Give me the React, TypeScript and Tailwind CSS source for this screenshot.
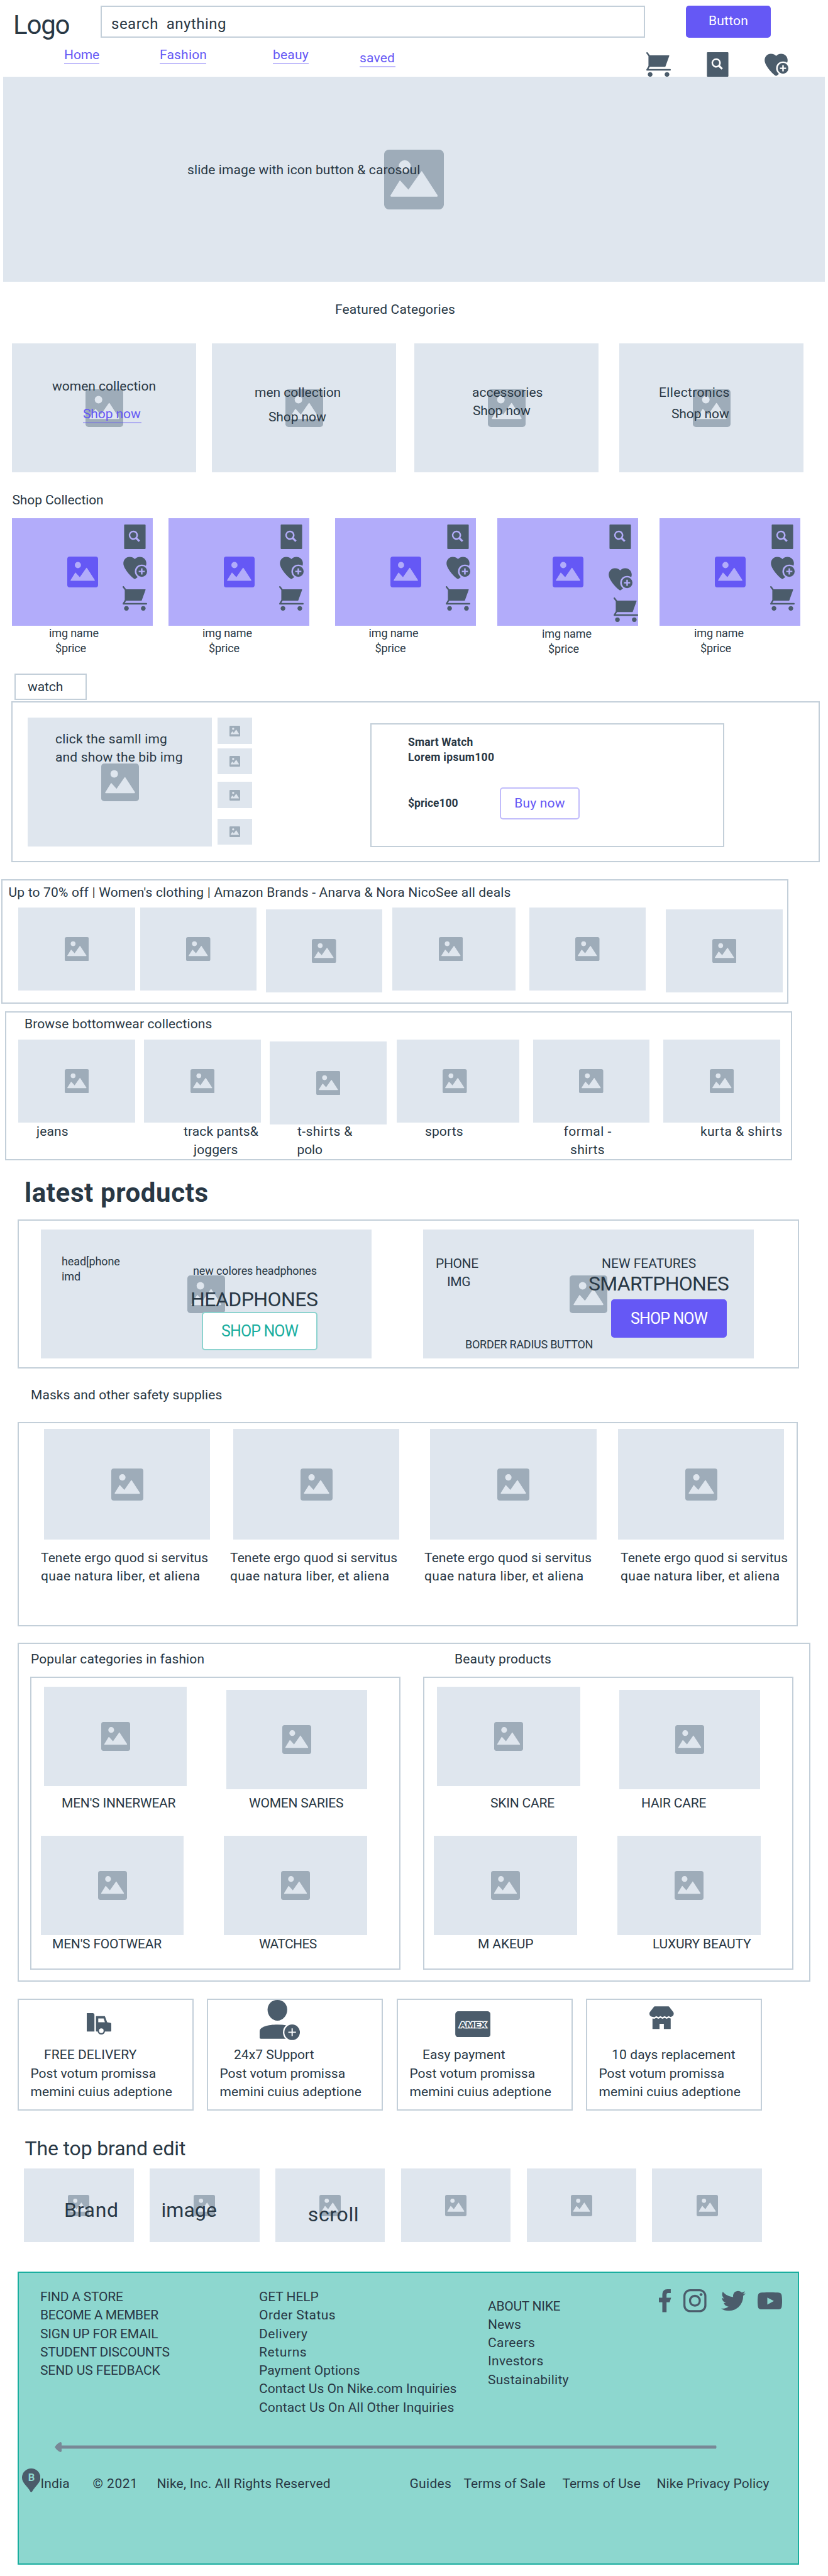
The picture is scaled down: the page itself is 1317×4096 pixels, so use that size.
import React from "react";
import { FaTwitter } from "react-icons/fa";
import { twMerge } from "tailwind-merge";

type Kids = { className?: string; children?: React.ReactNode };

/* Body-size line of text */
function T({ className = "", children }: Kids) {
  return <div className={twMerge("whitespace-pre text-[21px] leading-[29px] tracking-[0.12px]", className)}>{children}</div>;
}
/* All-caps body line, set slightly tighter */
function Caps({ className = "", children }: Kids) {
  return <div className={twMerge("whitespace-pre text-[21px] leading-[29px] tracking-[-0.2px]", className)}>{children}</div>;
}
function Small({ className = "", children }: Kids) {
  return <div className={twMerge("whitespace-pre text-[18px] leading-[24.4px] tracking-[-0.12px]", className)}>{children}</div>;
}
function Big({ className = "", children }: Kids) {
  return <div className={twMerge("whitespace-pre text-[32px] leading-[40px]", className)}>{children}</div>;
}
function Frame({ className = "", children }: Kids) {
  return <div className={"shrink-0 border-2 border-[#c3cfd9] " + className}>{children}</div>;
}

function PictureIcon({ className = "" }: { className?: string }) {
  return (
    <svg viewBox="0 0 100 100" className={"shrink-0 " + className}>
      <rect width="100" height="100" rx="8" className="fill-current" />
      <circle cx="34.5" cy="27.5" r="10" fill="var(--hole)" />
      <path
        d="M12 78.7 Q10 78.7 10.6 76.6 L25.6 52.4 Q26.5 51 27.5 52.3 L40.7 66.9 L61.8 36.8 Q62.8 35.4 63.8 36.8 L89.3 76 Q90 78.7 88 78.7 Z"
        fill="var(--hole)"
      />
    </svg>
  );
}

function Pic({ className = "", icon = "size-[38.5px]", children }: Kids & { icon?: string }) {
  return (
    <div className={"relative flex shrink-0 items-center justify-center bg-[#dfe6ee] text-[#9eacb9] [--hole:#dfe6ee] " + className}>
      <PictureIcon className={icon} />
      {children && <div className="absolute inset-0 text-[#293845]">{children}</div>}
    </div>
  );
}

function CartIcon({ className = "" }: { className?: string }) {
  return (
    <svg viewBox="0 0 32 32" className={"size-[39px] shrink-0 text-[#4b5c6b] " + className}>
      <path d="M3 4H29.5Q30.1 4 30 4.7L25.2 18Q25 19 24.3 19H3Z" className="fill-current" />
      <path d="M1 1L4 5V18L1 23H31" fill="none" className="stroke-current" strokeWidth="2" strokeLinecap="round" strokeLinejoin="round" />
      <circle cx="5" cy="29" r="3" className="fill-current" />
      <circle cx="27" cy="29" r="3" className="fill-current" />
    </svg>
  );
}
function SearchDocIcon({ className = "" }: { className?: string }) {
  return (
    <svg viewBox="0 0 32 32" className={"size-[39px] shrink-0 text-[#4b5c6b] " + className}>
      <path
        fillRule="evenodd"
        className="fill-current"
        d="M3 0H29Q30 0 30 1V31Q30 32 29 32H3Q2 32 2 31V1Q2 0 3 0ZM14 8A6 6 0 1 0 17.2 19.1L21 22.8L22.8 21L19.1 17.2A6 6 0 0 0 14 8ZM14 10A4 4 0 1 1 14 18A4 4 0 0 1 14 10Z"
      />
    </svg>
  );
}
function HeartPlusIcon({ className = "" }: { className?: string }) {
  const id = React.useId();
  return (
    <svg viewBox="0 0 32 32" className={"size-[39px] shrink-0 text-[#4b5c6b] " + className}>
      <mask id={id}>
        <rect width="32" height="32" fill="#fff" />
        <circle cx="25" cy="21" r="9" fill="#000" />
      </mask>
      <path
        mask={`url(#${id})`}
        className="fill-current"
        d="M16 31C14.2 31 1 18.5 1 10.5C1 5.6 4.6 2 9 2C12.2 2 14.8 3.3 16 5C17.2 3.3 19.8 2 22.5 2C27.4 2 31 5.6 31 10.5C31 18.5 17.8 31 16 31Z"
      />
      <path fillRule="evenodd" className="fill-current" d="M25 14A7 7 0 1 1 25 28A7 7 0 0 1 25 14ZM24 17V20H21V22H24V25H26V22H29V20H26V17Z" />
    </svg>
  );
}
function TruckIcon({ className = "" }: { className?: string }) {
  return (
    <svg viewBox="0 0 32 28" className={"h-[34.1px] w-[39px] shrink-0 text-[#4b5c6b] " + className}>
      <path
        fillRule="evenodd"
        className="fill-current"
        d="M0 0H8Q10 .2 10 2V24H0ZM12.6 4H23.4Q23.7 4 23.8 4.4L26.6 12L31 12.8Q32 13 32 14V23Q32 24 31 24H23.8A4.9 4.9 0 0 1 14.2 24H13Q12 24 12 23V4.6Q12 4 12.6 4ZM15 7V12H23.7L22 7ZM19 20A3 3 0 1 0 19 26A3 3 0 0 0 19 20Z"
      />
    </svg>
  );
}
function PersonPlusIcon({ className = "" }: { className?: string }) {
  const id = React.useId();
  return (
    <svg viewBox="0 0 105 105" className={"size-[64px] shrink-0 text-[#4b5c6b] " + className}>
      <mask id={id}>
        <rect width="105" height="105" fill="#fff" />
        <circle cx="84.8" cy="84.3" r="24" fill="#000" />
      </mask>
      <path className="fill-current" d="M46.3 0C61 0 72 11 72 25.5C72 41 60 54.2 46.3 54.2C32.6 54.2 20.6 41 20.6 25.5C20.6 11 31.6 0 46.3 0Z" />
      <path mask={`url(#${id})`} className="fill-current" d="M0 99V82C0 70 22 64.3 46.3 64.3Q60 64.3 70 66.5V101.4H3Q.4 101.4 0 99Z" />
      <path
        fillRule="evenodd"
        className="fill-current"
        d="M84.8 64A20.3 20.3 0 1 1 84.8 104.6A20.3 20.3 0 0 1 84.8 64ZM83.2 74.3V82.9H74.8V85.7H83.2V94.3H86.4V85.7H94.8V82.9H86.4V74.3Z"
      />
    </svg>
  );
}
function AmexIcon({ className = "" }: { className?: string }) {
  return (
    <svg viewBox="0 0 92 68" className={"h-[41.4px] w-[56.3px] shrink-0 " + className}>
      <rect width="92" height="68" rx="8" fill="#4b5c6b" />
      <text
        x="46" y="42" textAnchor="middle" textLength="70" lengthAdjust="spacingAndGlyphs"
        fontFamily="Roboto, sans-serif" fontWeight="900" fontSize="22"
        fill="#4b5c6b" stroke="#fff" strokeWidth="4.5" strokeLinejoin="miter" paintOrder="stroke"
      >
        AMEX
      </text>
    </svg>
  );
}
function StoreIcon({ className = "" }: { className?: string }) {
  return (
    <svg viewBox="0 0 32 30" className={"h-[36.5px] w-[38.6px] shrink-0 text-[#4b5c6b] " + className}>
      <path className="fill-current" d="M7 0H25Q25.8 0 26.1 .7L31.4 7.6Q32 8.5 32 9.5A4.2 4.2 0 0 1 27.5 14L25.3 12.9L22.7 14.4L20 12.9L17.2 14.4L14.5 12.9L11.8 14.4L9 12.9L6.4 14.4L4.5 14A4.2 4.2 0 0 1 0 9.5Q0 8.5 .6 7.6L5.9 .7Q6.2 0 7 0Z" />
      <path className="fill-current" d="M4 16L6.4 16.4L9 15.2L11.8 16.4L14.5 15.2L17.2 16.4L20 15.2L22.7 16.4L25.3 15.2L28 16V30H19V23H13.3V30H4Z" />
    </svg>
  );
}

function NavLink({ className = "", children }: Kids) {
  return (
    <a className={"shrink-0 whitespace-pre border-b-2 border-[#c1bcfb] text-[21px] leading-[25px] text-[#6558f5] " + className}>
      {children}
    </a>
  );
}

function Header() {
  return (
    <header className="flex h-[122px] flex-col">
      <div className="flex h-[60px] items-start">
        <div className="ml-[21px] mt-[14.5px] w-[100px] text-[42px] leading-[50px] tracking-[-1.2px]">Logo</div>
        <Frame className="ml-[39px] mt-[9px] h-[51px] w-[866px] pl-[15px] pt-[11px]">
          <div className="whitespace-pre text-[24px] leading-[33px] tracking-[0.5px]">search  anything</div>
        </Frame>
        <button className="ml-[65px] mt-[9px] h-[51px] w-[135px] rounded-[5px] bg-[#6558f5] pb-px text-[21px] tracking-[0.2px] text-white">
          Button
        </button>
      </div>
      <nav className="flex items-start">
        <NavLink className="ml-[102px] mt-[15px] w-[56px] tracking-[-0.1px]">Home</NavLink>
        <NavLink className="ml-[96px] mt-[15px] w-[74px] tracking-[0.2px]">Fashion</NavLink>
        <NavLink className="ml-[106px] mt-[15px] w-[57px] tracking-[0.2px]">beauy</NavLink>
        <NavLink className="ml-[81px] mt-[20px] w-[57px] tracking-[0.2px]">saved</NavLink>
        <CartIcon className="ml-[399px] mt-[23px]" />
        <SearchDocIcon className="ml-[55px] mt-[23px]" />
        <HeartPlusIcon className="ml-[54px] mt-[23px]" />
      </nav>
    </header>
  );
}

function Featured() {
  return (
    <section className="flex h-[303px] flex-col">
      <T className="ml-[533px] mt-[30px]">Featured Categories</T>
      <div className="mt-[39px] flex">
        <Pic className="ml-[19px] h-[205px] w-[293px]" icon="size-[60px]">
          <T className="ml-[64px] mt-[54px] tracking-[0px]">women collection</T>
          <div className="ml-[113px] mt-[17px] flex">
            <a className="w-[93px] whitespace-pre border-b-2 border-[#6558f5]/40 text-[21px] leading-[25px] tracking-[-0.1px] text-[#6558f5]">Shop now</a>
          </div>
        </Pic>
        <Pic className="ml-[25px] h-[205px] w-[293px]" icon="size-[60px]">
          <T className="ml-[68px] mt-[64px] tracking-[0px]">men collection</T>
          <T className="ml-[90px] mt-[10px] tracking-[-0.1px]">Shop now</T>
        </Pic>
        <Pic className="ml-[29px] h-[205px] w-[293px]" icon="size-[60px]">
          <T className="ml-[92px] mt-[64px] tracking-[0px]">accessories</T>
          <T className="ml-[93px] tracking-[-0.1px]">Shop now</T>
        </Pic>
        <Pic className="ml-[33px] h-[205px] w-[293px]" icon="size-[60px]">
          <T className="ml-[63px] mt-[64px] tracking-[0.35px]">Ellectronics</T>
          <T className="ml-[83px] mt-[5px] tracking-[-0.1px]">Shop now</T>
        </Pic>
      </div>
    </section>
  );
}

const products = [
  { card: "ml-[19px]", name: "ml-[59px]", heart: "", cart: "" },
  { card: "ml-[25px]", name: "ml-[54px]", heart: "", cart: "" },
  { card: "ml-[41px]", name: "ml-[53.5px]", heart: "", cart: "" },
  { card: "ml-[34px]", name: "ml-[71px] pt-[1px]", heart: "mt-[18px]", cart: "ml-[9px]" },
  { card: "ml-[34px]", name: "ml-[55px]", heart: "", cart: "" },
];

function ShopCollection() {
  return (
    <section className="flex h-[320px] flex-col">
      <T className="ml-[19.5px] mt-[29.5px] tracking-[-0.1px]">Shop Collection</T>
      <div className="mt-[14.5px] flex">
        {products.map((p, i) => (
          <article key={i} className={"w-[224px] shrink-0 " + p.card}>
            <div className="relative flex h-[171px] items-center justify-center bg-[#b2acfa] text-[#6558f5] [--hole:#b2acfa]">
              <PictureIcon className="size-[49px]" />
              <div className="absolute left-[176px] top-[10px] flex flex-col gap-[9.8px]">
                <SearchDocIcon />
                <HeartPlusIcon className={p.heart} />
                <CartIcon className={p.cart} />
              </div>
            </div>
            <div className={p.name}>
              <Small>img name</Small>
              <Small className="ml-[10px]">$price</Small>
            </div>
          </article>
        ))}
      </div>
    </section>
  );
}

function Watch() {
  return (
    <section className="flex flex-col">
      <Frame className="ml-[23px] h-[42px] w-[115px] pl-[19px] pt-[5px]">
        <T className="tracking-[-0.1px]">watch</T>
      </Frame>
      <Frame className="ml-[18px] mt-[2px] flex h-[256px] w-[1286px]">
        <Pic className="ml-[24px] mt-[24px] h-[205px] w-[293px]" icon="size-[60px]">
          <T className="ml-[44px] mt-[20px] tracking-[0.2px]">click the samll img</T>
          <T className="ml-[44px] tracking-[0.16px]">and show the bib img</T>
        </Pic>
        <div className="ml-[9px] mt-[24px] flex flex-col">
          <Pic className="h-[42px] w-[55px]" icon="size-[17px]" />
          <Pic className="mt-[7px] h-[41px] w-[55px]" icon="size-[17px]" />
          <Pic className="mt-[12px] h-[42px] w-[55px]" icon="size-[17px]" />
          <Pic className="mt-[17px] h-[41px] w-[55px]" icon="size-[17px]" />
        </div>
        <Frame className="ml-[188px] mt-[33px] h-[197px] w-[563px] pl-[58px] pt-[16px] text-[17.5px] font-bold leading-[24.4px]">
          <div className="tracking-[0.16px]">Smart Watch</div>
          <div className="tracking-[0.3px]">Lorem ipsum100</div>
          <div className="mt-[35px] flex items-center">
            <div className="w-[146px]">$price100</div>
            <button className="h-[51px] w-[127px] rounded-[5px] border-2 border-[#c1bcfb] text-[21px] font-normal tracking-[0.2px] text-[#6558f5]">
              Buy now
            </button>
          </div>
        </Frame>
      </Frame>
    </section>
  );
}

function Deals() {
  return (
    <Frame className="ml-[2px] mt-[27px] h-[198px] w-[1252px]">
      <T className="ml-[9.5px] mt-[5px] tracking-[0.18px]">Up to 70% off | Women's clothing | Amazon Brands - Anarva &amp; Nora NicoSee all deals</T>
      <div className="mt-[9px] flex items-start">
        <Pic className="ml-[25px] h-[132px] w-[186px]" />
        <Pic className="ml-[8px] h-[132px] w-[185px]" />
        <Pic className="ml-[15px] mt-[3px] h-[132px] w-[185px]" />
        <Pic className="ml-[16px] h-[132px] w-[196px]" icon="size-[38.5px] mr-[10px]" />
        <Pic className="ml-[22px] h-[132px] w-[185px]" />
        <Pic className="ml-[32px] mt-[3px] h-[132px] w-[186px]" />
      </div>
    </Frame>
  );
}

function Bottomwear() {
  return (
    <Frame className="ml-[8px] mt-[12px] h-[237px] w-[1252px]">
      <T className="ml-[29px] mt-[4px]">Browse bottomwear collections</T>
      <div className="mt-[10px] flex items-start">
        <div className="ml-[19px] w-[186px] shrink-0">
          <Pic className="h-[132px]" />
          <T className="ml-[29px]">jeans</T>
        </div>
        <div className="ml-[14px] w-[186px] shrink-0">
          <Pic className="h-[132px]" />
          <T className="ml-[63px]">track pants&amp;</T>
          <T className="ml-[79px]">joggers</T>
        </div>
        <div className="ml-[14px] mt-[3px] w-[186px] shrink-0">
          <Pic className="h-[132px]" />
          <T className="-mt-[3px] ml-[44px] tracking-[0.4px]">t-shirts &amp;</T>
          <T className="ml-[43.5px] tracking-[-0.1px]">polo</T>
        </div>
        <div className="ml-[16px] w-[195px] shrink-0">
          <Pic className="h-[132px]" icon="size-[38.5px] mr-[10px]" />
          <T className="ml-[45px]">sports</T>
        </div>
        <div className="ml-[22px] w-[185px] shrink-0">
          <Pic className="h-[132px]" />
          <T className="ml-[48.5px] tracking-[0.5px]">formal -</T>
          <T className="ml-[59px] tracking-[0.36px]">shirts</T>
        </div>
        <div className="ml-[22px] w-[186px] shrink-0">
          <Pic className="h-[132px]" />
          <T className="ml-[59px] tracking-[0.45px]">kurta &amp; shirts</T>
        </div>
      </div>
    </Frame>
  );
}

function Latest() {
  return (
    <section className="flex flex-col">
      <h1 className="ml-[39px] mt-[26.5px] h-[50px] text-[42px] font-bold leading-[50px] tracking-[0.6px]">latest products</h1>
      <Frame className="ml-[28px] mt-[17.5px] flex h-[237px] w-[1243px]">
        <Pic className="ml-[35px] mt-[14px] h-[205px] w-[526px]" icon="size-[60px]">
          <Small className="absolute left-[33px] top-[39px]">{"head[phone\nimd"}</Small>
          <Small className="absolute left-[242px] top-[54px]">new colores headphones</Small>
          <Big className="absolute left-[238px] top-[91px] tracking-[-0.55px]">HEADPHONES</Big>
          <button className="absolute left-[256px] top-[131px] h-[61px] w-[184px] rounded-[5px] border-2 border-[#8dd3cf] bg-white text-[25px] tracking-[-0.9px] text-[#1aae9f]">
            SHOP NOW
          </button>
        </Pic>
        <Pic className="ml-[82px] mt-[14px] h-[205px] w-[526px]" icon="size-[60px]">
          <Caps className="absolute left-[20px] top-[40px] tracking-[-0.36px]">PHONE</Caps>
          <Caps className="absolute left-[38px] top-[69px] tracking-[-0.42px]">IMG</Caps>
          <Caps className="absolute left-[284px] top-[40px] tracking-[0px]">NEW FEATURES</Caps>
          <Big className="absolute left-[263px] top-[66px] tracking-[-0.7px]">SMARTPHONES</Big>
          <button className="absolute left-[299px] top-[111px] h-[61px] w-[184px] rounded-[5px] bg-[#6558f5] text-[25px] tracking-[-0.9px] text-white">
            SHOP NOW
          </button>
          <Small className="absolute left-[67px] top-[171px] tracking-[-0.25px]">BORDER RADIUS BUTTON</Small>
        </Pic>
      </Frame>
    </section>
  );
}

const masks = [
  { box: "ml-[40px] w-[264px]", text: "-ml-[5px]" },
  { box: "ml-[37px] w-[264px]", text: "-ml-[5px]" },
  { box: "ml-[49px] w-[265px]", text: "-ml-[9px]" },
  { box: "ml-[34px] w-[264px]", text: "ml-[4px]" },
];

function Masks() {
  return (
    <section className="flex flex-col">
      <T className="ml-[49px] mt-[28px] tracking-[0.08px]">Masks and other safety supplies</T>
      <Frame className="ml-[28px] mt-[28px] flex h-[325px] w-[1241px]">
        {masks.map((m, i) => (
          <div key={i} className={"mt-[9px] shrink-0 " + m.box}>
            <Pic className="h-[176px]" icon="size-[51px]" />
            <div className={"mt-[15px] " + m.text}>
              <T className="tracking-[0.11px]">Tenete ergo quod si servitus</T>
              <T className="tracking-[0.36px]">quae natura liber, et aliena</T>
            </div>
          </div>
        ))}
      </Frame>
    </section>
  );
}

type Cell = { box: string; pic: string; label: string; text: string };
function CategoryPanel({ className, rows }: { className: string; rows: Cell[][] }) {
  return (
    <Frame className={className}>
      {rows.map((row, r) => (
        <div key={r} className="flex h-[236.5px] items-start">
          {row.map((c) => (
            <div key={c.text} className={"shrink-0 " + c.box}>
              <Pic className={c.pic} icon="size-[46px]" />
              <Caps className={c.label}>{c.text}</Caps>
            </div>
          ))}
        </div>
      ))}
    </Frame>
  );
}

const fashion: Cell[][] = [
  [
    { box: "ml-[20px] w-[227px]", pic: "h-[158px]", label: "ml-[28px] mt-[13px]", text: "MEN'S INNERWEAR" },
    { box: "ml-[63px] mt-[5px] w-[224px]", pic: "h-[158px]", label: "ml-[36px] mt-[8px]", text: "WOMEN SARIES" },
  ],
  [
    { box: "ml-[15px] w-[227px]", pic: "h-[158px]", label: "ml-[18px] mt-[0.5px]", text: "MEN'S FOOTWEAR" },
    { box: "ml-[64px] w-[228px]", pic: "h-[158px]", label: "ml-[56px] mt-[0.5px] tracking-[-0.6px]", text: "WATCHES" },
  ],
];
const beauty: Cell[][] = [
  [
    { box: "ml-[20px] w-[228px]", pic: "h-[158px]", label: "ml-[85px] mt-[13px]", text: "SKIN CARE" },
    { box: "ml-[62px] mt-[5px] w-[224px]", pic: "h-[158px]", label: "ml-[35px] mt-[8px]", text: "HAIR CARE" },
  ],
  [
    { box: "ml-[15px] w-[228px]", pic: "h-[158px]", label: "ml-[70px] mt-[0.5px] tracking-[-0.1px]", text: "M AKEUP" },
    { box: "ml-[64px] w-[228px]", pic: "h-[158px]", label: "ml-[56px] mt-[0.5px]", text: "LUXURY BEAUTY" },
  ],
];

function Popular() {
  return (
    <Frame className="ml-[28px] mt-[26px] h-[539px] w-[1261px]">
      <div className="mt-[10px] flex">
        <T className="ml-[19px] w-[674px]">Popular categories in fashion</T>
        <T>Beauty products</T>
      </div>
      <div className="mt-[13px] flex">
        <CategoryPanel className="ml-[18px] h-[466px] w-[589px] pt-[14px]" rows={fashion} />
        <CategoryPanel className="ml-[36px] h-[466px] w-[589px] pt-[14px]" rows={beauty} />
      </div>
    </Frame>
  );
}

const services = [
  { box: "ml-[28px]", icon: <TruckIcon className="ml-[108px] mt-[21px]" />, title: "FREE DELIVERY", pad: "pl-[40px] tracking-[0.06px]" },
  { box: "ml-[21px]", icon: <PersonPlusIcon className="ml-[82px]" />, title: "24x7 SUpport", pad: "pl-[41px] tracking-[0.04px]" },
  { box: "ml-[22px]", icon: <AmexIcon className="ml-[91px] mt-[18px]" />, title: "Easy payment", pad: "pl-[39px]" },
  { box: "ml-[21px]", icon: <StoreIcon className="ml-[99px] mt-[10px]" />, title: "10 days replacement", pad: "pl-[39px]" },
];

function Services() {
  return (
    <section className="mt-[27px] flex">
      {services.map((s) => (
        <Frame key={s.title} className={"h-[178px] w-[280px] " + s.box}>
          <div className="flex h-[73px] items-start">{s.icon}</div>
          <T className={s.pad}>{s.title}</T>
          <T className="pl-[18.5px] leading-[30px] tracking-[0.01px]">Post votum promissa</T>
          <T className="pl-[18.5px] tracking-[0.1px]">memini cuius adeptione</T>
        </Frame>
      ))}
    </section>
  );
}

function Brands() {
  return (
    <section className="flex flex-col">
      <Big className="ml-[39.5px] mt-[40px] tracking-[-0.15px]">The top brand edit</Big>
      <div className="ml-[38px] mt-[12px] flex gap-[25.2px]">
        <Pic className="h-[117px] w-[174.7px]" icon="size-[34px]">
          <Big className="ml-[64px] mt-[46px] tracking-[0.7px]">Brand</Big>
        </Pic>
        <Pic className="h-[117px] w-[174.7px]" icon="size-[34px]">
          <Big className="ml-[18.5px] mt-[46px] tracking-[0.1px]">image</Big>
        </Pic>
        <Pic className="h-[117px] w-[174.7px]" icon="size-[34px]">
          <Big className="ml-[52px] mt-[53px] tracking-[0.65px]">scroll</Big>
        </Pic>
        <Pic className="h-[117px] w-[174.7px]" icon="size-[34px]" />
        <Pic className="h-[117px] w-[174.7px]" icon="size-[34px]" />
        <Pic className="h-[117px] w-[174.7px]" icon="size-[34px]" />
      </div>
    </section>
  );
}

function Footer() {
  return (
    <footer className="ml-[28px] mt-[47px] flex h-[466px] w-[1243px] flex-col border-2 border-[#1aae9f] bg-[#8dd7cf]">
      <div className="flex h-[269px] items-start">
        <div className="ml-[34px] mt-[24px] w-[348px]">
          <Caps className="leading-[29.25px]">FIND A STORE</Caps>
          <Caps className="leading-[29.25px] tracking-[-0.42px]">BECOME A MEMBER</Caps>
          <Caps className="leading-[29.25px] tracking-[-0.16px]">SIGN UP FOR EMAIL</Caps>
          <Caps className="leading-[29.25px] tracking-[-0.23px]">STUDENT DISCOUNTS</Caps>
          <Caps className="leading-[29.25px] tracking-[-0.12px]">SEND US FEEDBACK</Caps>
        </div>
        <div className="mt-[24px] w-[364px]">
          <Caps className="leading-[29.25px] tracking-[-0.06px]">GET HELP</Caps>
          <T className="leading-[29.25px] tracking-[0.45px]">Order Status</T>
          <T className="leading-[29.25px] tracking-[0.5px]">Delivery</T>
          <T className="leading-[29.25px] tracking-[0.6px]">Returns</T>
          <T className="leading-[29.25px] tracking-[0.02px]">Payment Options</T>
          <T className="leading-[29.25px] tracking-[0.03px]">Contact Us On Nike.com Inquiries</T>
          <T className="leading-[29.25px] tracking-[0.16px]">Contact Us On All Other Inquiries</T>
        </div>
        <div className="mt-[38.5px] w-[271px]">
          <Caps className="leading-[29.25px] tracking-[-0.27px]">ABOUT NIKE</Caps>
          <T className="leading-[29.25px] tracking-[0.03px]">News</T>
          <T className="leading-[29.25px] tracking-[0.43px]">Careers</T>
          <T className="leading-[29.25px] tracking-[0.3px]">Investors</T>
          <T className="leading-[29.25px] tracking-[0.25px]">Sustainability</T>
        </div>
        <div className="mt-[25px] flex items-center text-[#4b5c6b]">
          <svg viewBox="0 0 16 30" className="ml-[1px] h-[36.6px] w-[19.5px] shrink-0">
            <path className="fill-current" d="M4.5 30V17H0V11H4.5V7.5C4.5 2.5 7 0 11 0H15.5V5H12Q10 5 10 7.3V11H16L14 17H10V30Z" />
          </svg>
          <svg viewBox="0 0 30 30" className="ml-[19.5px] size-[36.6px] shrink-0">
            <rect x="1.35" y="1.35" width="27.3" height="27.3" rx="7.5" fill="none" className="stroke-current" strokeWidth="2.7" />
            <circle cx="15" cy="15" r="6.4" fill="none" className="stroke-current" strokeWidth="2.7" />
            <circle cx="23" cy="7" r="1.9" className="fill-current" />
          </svg>
          <FaTwitter className="ml-[23px] size-[39px] shrink-0" />
          <svg viewBox="0 0 32 22.5" className="ml-[19.5px] h-[27.5px] w-[39px] shrink-0">
            <path
              fillRule="evenodd"
              className="fill-current"
              d="M16 0C22 0 26 .2 28 .4Q31 .8 31.5 4C31.9 7 32 9 32 11.2C32 14 31.9 16 31.5 18.6Q31 21.8 28 22.1C25 22.4 21 22.5 16 22.5C11 22.5 7 22.4 4 22.1Q1 21.8 .5 18.6C.1 16 0 14 0 11.2C0 9 .1 7 .5 4Q1 .8 4 .4C6 .2 10 0 16 0ZM12.7 6.7V15.9L21.3 11.2Z"
            />
          </svg>
        </div>
      </div>
      <svg viewBox="0 0 1053 16" className="ml-[57px] h-[16px] w-[1053px] shrink-0">
        <path fill="#788896" d="M0 8Q4 2 9 0Q11 0 11 2V5.5H1052Q1053 8 1052 10.5H11V14Q11 16 9 16Q4 14 0 8Z" />
      </svg>
      <div className="mt-[26px] flex items-start">
        <svg viewBox="0 0 29.4 37.6" className="ml-[5px] h-[37.6px] w-[29.4px] shrink-0">
          <path fill="#4b5c6b" d="M14.7 37.6Q13.5 37.6 12.8 36C9 28.5 0 23 0 14.7A14.7 14.7 0 0 1 29.4 14.7C29.4 23 20.4 28.5 16.6 36Q15.9 37.6 14.7 37.6Z" />
          <text x="14.9" y="20.4" textAnchor="middle" fontFamily="Roboto, sans-serif" fontWeight="700" fontSize="16.5" fill="#8dd7cf">B</text>
        </svg>
        <T className="mt-[10px] w-[83px]">India</T>
        <T className="mt-[10px] w-[102px] tracking-[0.5px]">© 2021</T>
        <T className="mt-[10px] w-[402px] tracking-[0.22px]">Nike, Inc. All Rights Reserved</T>
        <T className="mt-[10px] w-[86px] tracking-[0.35px]">Guides</T>
        <T className="mt-[10px] w-[157px] tracking-[0.11px]">Terms of Sale</T>
        <T className="mt-[10px] w-[150px] tracking-[0.01px]">Terms of Use</T>
        <T className="mt-[10px] tracking-[0.16px]">Nike Privacy Policy</T>
      </div>
    </footer>
  );
}

export default function App() {
  return (
    <div className="flex h-[4096px] w-[1317px] flex-col overflow-hidden bg-white font-[Roboto,sans-serif] text-[#293845]">
      <Header />
      <Pic className="ml-[5px] h-[326px] w-[1307px]" icon="size-[95px]">
        <T className="ml-[293px] mt-[134px] tracking-[0.1px]">slide image with icon button &amp; carosoul</T>
      </Pic>
      <Featured />
      <ShopCollection />
      <Watch />
      <Deals />
      <Bottomwear />
      <Latest />
      <Masks />
      <Popular />
      <Services />
      <Brands />
      <Footer />
    </div>
  );
}
